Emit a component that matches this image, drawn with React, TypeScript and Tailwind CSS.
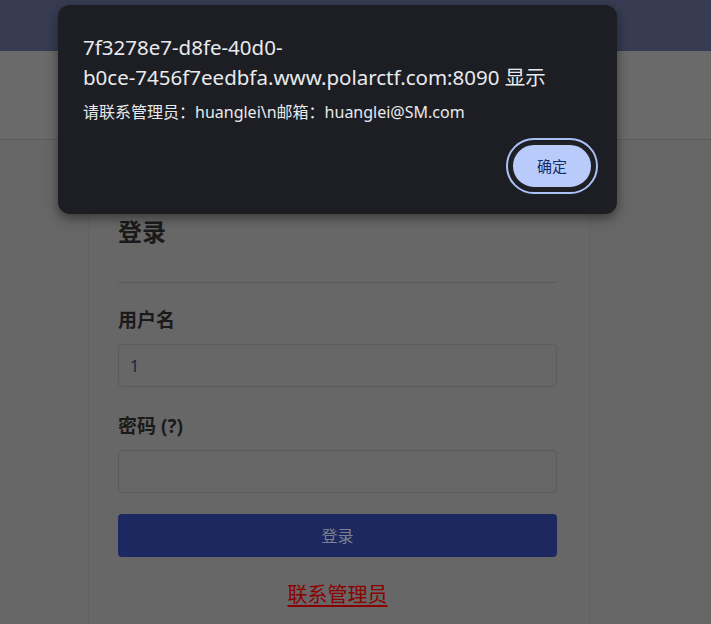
export default function App() {
  const font = { fontFamily: '"Noto Sans", "Noto Sans CJK SC", sans-serif' };
  return (
    <div className="relative h-[624px] w-[711px] overflow-hidden bg-[#666666]" style={font}>
      {/* 顶部导航 */}
      <div className="h-[51px] bg-[#373c52]" />
      <div className="h-[89px] border-b border-[#5c5c5c] bg-[#6a6a6a]" />

      {/* 登录卡片 */}
      <div className="ml-[88px] mt-[40px] h-[500px] w-[502px] border-x border-[#626262] bg-[#676767] pl-[29px] pr-[32px] pt-[36px]">
        <h1 className="text-[24px] font-bold leading-[32px] text-[#1a1a1a]">登录</h1>
        <hr className="mt-[34px] border-[#5a5a5a]" />
        <label className="mt-[25px] block text-[19px] font-bold leading-[24px] text-[#1a1a1a]">用户名</label>
        <div className="mt-[12px] flex h-[43px] items-center rounded border border-[#5c5c5c] px-[11px] text-[16px] text-[#1c2340]">
          1
        </div>
        <label className="mt-[27px] block text-[19px] font-bold leading-[24px] text-[#1a1a1a]">密码 (?)</label>
        <div className="mt-[12px] h-[43px] rounded border border-[#5c5c5c]" />
        <button className="mt-[21px] flex h-[43px] w-full items-center justify-center rounded bg-[#1e2860] text-[16px] text-[#7c8090]">
          登录
        </button>
        <div className="mt-[24px] text-center leading-[28px]">
          <a className="text-[20px] text-[#8b0000] underline underline-offset-[3px]">联系管理员</a>
        </div>
      </div>

      {/* alert 对话框 */}
      <div className="absolute left-[58px] top-[5px] h-[209px] w-[559px] rounded-[12px] bg-[#1d1e23] px-[25px] pt-[27px] shadow-[0_4px_12px_rgba(0,0,0,0.45)]">
        <div className="text-[20.5px] leading-[30px] text-[#e8eaed]">
          7f3278e7-d8fe-40d0-
          <br />
          b0ce-7456f7eedbfa.www.polarctf.com:8090 显示
        </div>
        <div className="mt-[9px] text-[16px] leading-[22px] text-[#e8eaed]">请联系管理员：huanglei\n邮箱：huanglei@SM.com</div>
        <div className="mt-[15px] flex justify-end">
          <div className="-mr-[6px] rounded-full border-2 border-[#aac0f5] p-[2px]">
            <button className="flex h-[48px] w-[84px] items-center justify-center rounded-full border-[3px] border-[#202124] bg-[#b8cbfb] text-[15px] text-[#132c67]">
              确定
            </button>
          </div>
        </div>
      </div>
    </div>
  );
}
